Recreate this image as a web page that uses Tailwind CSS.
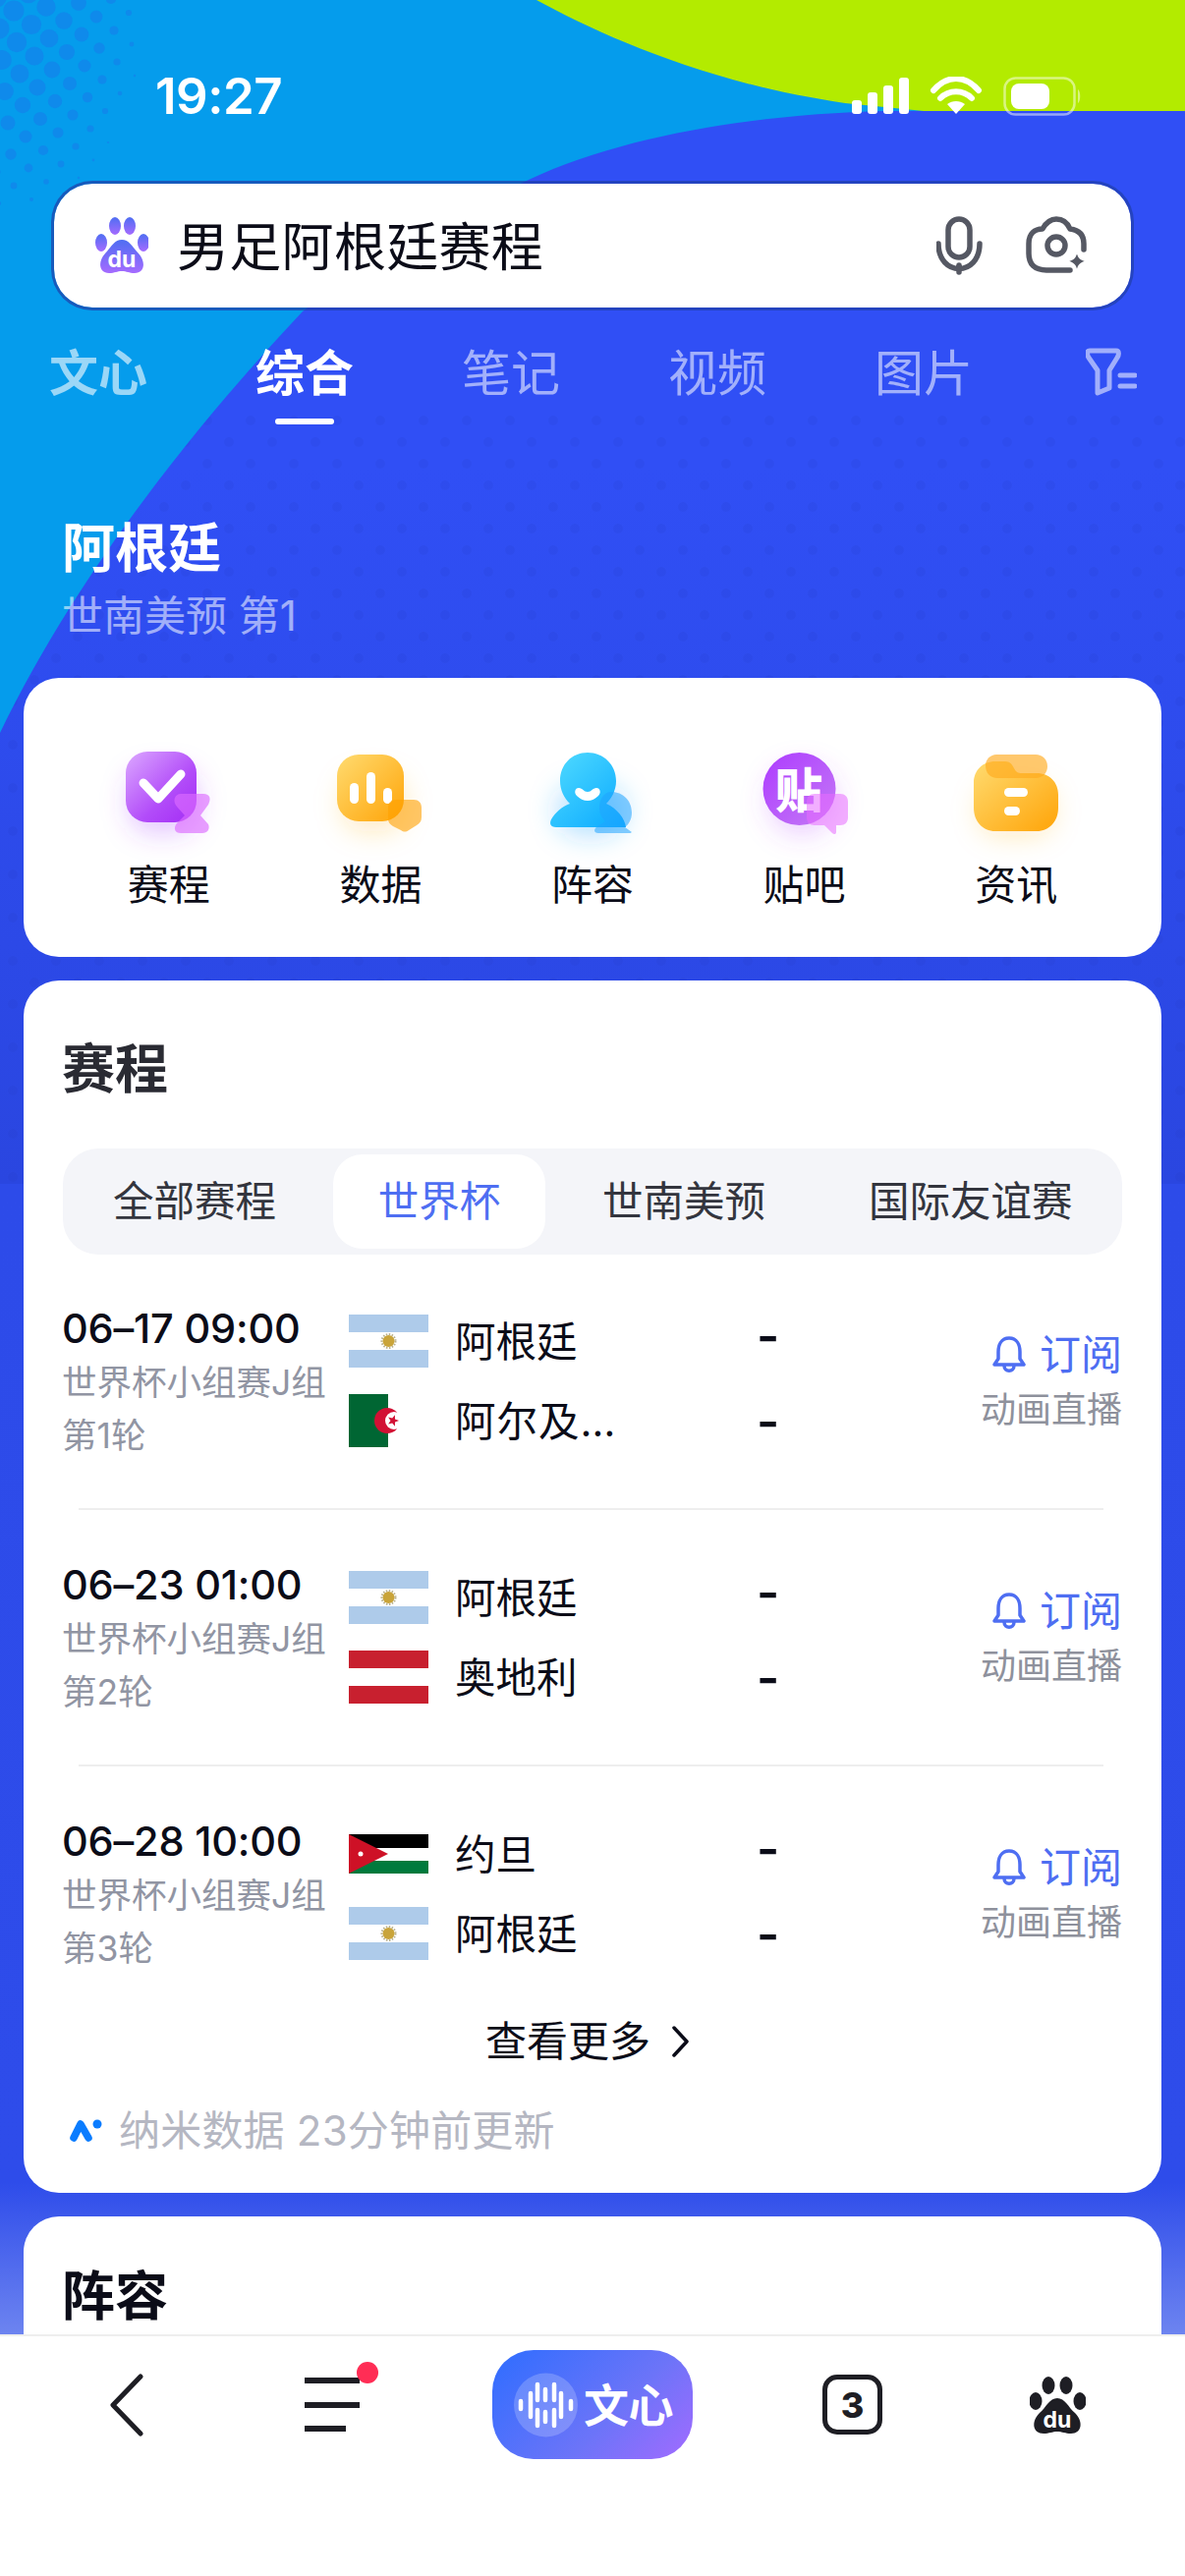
<!DOCTYPE html>
<html lang="zh-CN">
<head>
  <meta charset="UTF-8" />
  <meta name="viewport" content="width=device-width, initial-scale=1.0"/>
  <title>男足阿根廷赛程</title>
  <script src="https://cdn.jsdelivr.net/npm/@tailwindcss/browser@4"></script>
</head>
<body class="bg-white">
<div class="relative w-[1206px] h-[2622px] overflow-hidden flex flex-col font-['Inter','Noto_Sans_CJK_SC',sans-serif] text-[#0b0c18]">

  <!-- page backdrop -->
  <svg class="absolute top-0 left-0" width="1206" height="2376" viewBox="0 0 1206 2376">
    <defs>
      <linearGradient id="page" gradientUnits="userSpaceOnUse" x1="0" y1="0" x2="0" y2="2376">
        <stop offset="0" stop-color="#304ff5"/>
        <stop offset="0.2" stop-color="#304ff5"/>
        <stop offset="0.507" stop-color="#2a46e0"/>
        <stop offset="0.507" stop-color="#2d4be9"/>
        <stop offset="0.935" stop-color="#2e4cea"/>
        <stop offset="1" stop-color="#6d84f0"/>
      </linearGradient>
      <pattern id="halftone" width="44" height="44" patternUnits="userSpaceOnUse">
        <circle cx="13" cy="10" r="5" fill="#1c34b8" fill-opacity="0.1"/>
        <circle cx="35" cy="32" r="5" fill="#1c34b8" fill-opacity="0.1"/>
      </pattern>
    </defs>
    <rect width="1206" height="2376" fill="url(#page)"/>
    <rect y="420" width="1206" height="785" fill="url(#halftone)"/>
    <path d="M0 0H1206V113H900C780 116 640 135 538 183C440 230 370 270 308 317C230 400 90 560 0 746Z" fill="#059cec"/>
    <g id="dots" fill="#0f8aeb"></g>
    <path d="M546 0C610 35 720 85 860 105L940 113H1206V0Z" fill="#b3eb00"/>
  </svg>

  <div class="relative flex-1 overflow-hidden flex flex-col">
    <!-- status bar -->
    <div class="h-[184px] shrink-0 flex items-start pt-[70px] pl-[158px]">
      <span class="text-[51px] leading-[56px] font-semibold text-white tracking-[-0.5px]">19:27</span>
      <svg class="ml-auto mr-[102px] mt-[8px]" width="237" height="40" viewBox="865 78 237 40" fill="#fff">
        <rect x="865" y="102" width="10" height="14" rx="3"/>
        <rect x="881" y="94" width="10" height="22" rx="3"/>
        <rect x="897" y="87" width="10" height="29" rx="3"/>
        <rect x="913" y="79" width="10" height="37" rx="3"/>
        <path d="M948 92C962 76 980 76 994 92M955 100C964 91 978 91 987 100" fill="none" stroke="#fff" stroke-width="6" stroke-linecap="round"/>
        <path d="M962 106C967 102 975 102 980 106L971 116Z"/>
        <rect x="1020.500" y="79.500" width="71" height="37" rx="11" fill="none" stroke="#fff" stroke-opacity="0.5" stroke-width="2.500"/>
        <rect x="1027" y="85" width="39" height="26" rx="8"/>
        <path d="M1095 91C1098 93 1098 103 1095 105Z" fill-opacity="0.5"/>
      </svg>
    </div>

    <!-- search box -->
    <div class="mx-[52px] h-[132px] shrink-0 rounded-[42px] bg-white border-[3px] border-[#1f3fa8]/70 bg-clip-padding flex items-center pl-[42px] pr-[43px]">
      <svg width="54" height="58" viewBox="97 222 54 58">
        <defs>
          <linearGradient id="paw" x1="0" y1="0" x2="0" y2="1">
            <stop offset="0" stop-color="#4e6ef2"/>
            <stop offset="1" stop-color="#a56bff"/>
          </linearGradient>
        </defs>
        <g fill="url(#paw)">
          <ellipse cx="117" cy="231" rx="6" ry="9"/>
          <ellipse cx="132" cy="231" rx="6" ry="9"/>
          <ellipse cx="103" cy="248" rx="6" ry="9"/>
          <ellipse cx="146" cy="248" rx="6" ry="9"/>
          <path d="M124 245C132 245 135 253 141 259C149 268 147 279 137 279C131 279 129 277 124 277C119 277 117 279 111 279C101 279 99 268 107 259C113 253 116 245 124 245Z"/>
        </g>
        <text x="124" y="273" text-anchor="middle" font-size="23" font-weight="700" fill="#fff" font-family="Inter">du</text>
      </svg>
      <span class="ml-[29px] pt-[3px] text-[53px] leading-[70px] tracking-[0.3px]">男足阿根廷赛程</span>
      <svg class="ml-auto" width="155" height="60" viewBox="954 222 155 60" fill="none" stroke="#555863" stroke-width="5.500" stroke-linecap="round" stroke-linejoin="round">
        <rect x="966" y="225" width="22" height="39" rx="11"/>
        <path d="M956 250C956 284 998 284 998 250M977 272V279"/>
        <path d="M1090 277H1066C1054 277 1048 271 1048 260V250C1048 240 1054 235 1062 235C1066 228 1070 225 1076 225C1083 225 1087 228 1090 235C1098 236 1104 240 1104 250V256"/>
        <circle cx="1076" cy="252" r="9"/>
        <path d="M1097 255C1098 264 1100 266 1108 268C1100 270 1098 272 1097 281C1096 272 1094 270 1086 268C1094 266 1096 264 1097 255Z" fill="#555863" stroke="#fff" stroke-width="2"/>
      </svg>
    </div>

    <!-- search tabs -->
    <div class="mt-[28px] pl-[50px] flex gap-[110px] shrink-0 text-[50px] leading-[72px] text-white/55">
      <div class="w-[100px] font-bold text-white/60 whitespace-nowrap">文心</div>
      <div class="w-[100px] flex flex-col items-center font-bold text-white whitespace-nowrap">综合<span class="mt-[10px] w-[60px] h-[6px] rounded-full bg-white"></span></div>
      <div class="w-[100px] whitespace-nowrap">笔记</div>
      <div class="w-[100px] whitespace-nowrap">视频</div>
      <div class="w-[100px] whitespace-nowrap">图片</div>
      <svg class="ml-[5px] mt-[10px]" width="52" height="50" viewBox="1104 355 52 50" fill="none" stroke="#fff" stroke-opacity="0.55" stroke-width="5" stroke-linejoin="round">
        <path d="M1108 358H1135C1138 358 1138 362 1136 365L1128 378V396L1116 401V378L1107 365C1105 362 1105 358 1108 358Z"/>
        <path d="M1139 383H1154M1139 394H1154" stroke-linecap="round"/>
      </svg>
    </div>

    <!-- entity heading -->
    <div class="mt-[92px] pl-[63px] shrink-0">
      <h1 class="text-[54px] leading-[70px] font-bold text-white">阿根廷</h1>
      <p class="mt-[8px] text-[42px] leading-[50px] text-white/55">世南美预 第1</p>
    </div>

    <!-- quick links -->
    <div class="mt-[38px] mx-[24px] h-[284px] shrink-0 rounded-[36px] bg-white px-[40px] pt-[60px] grid grid-cols-5">
      <div class="flex flex-col items-center">
        <svg class="overflow-visible" width="130" height="110" viewBox="107 750 130 110">
          <defs>
            <filter id="glow" x="-60%" y="-60%" width="220%" height="220%"><feGaussianBlur stdDeviation="14"/></filter>
            <linearGradient id="ip" x1="0" y1="0" x2="1" y2="1"><stop offset="0" stop-color="#dca8ff"/><stop offset="0.6" stop-color="#b24cf9"/><stop offset="1" stop-color="#a32cf5"/></linearGradient>
            <linearGradient id="io" x1="0" y1="0" x2="1" y2="1"><stop offset="0" stop-color="#ffdb70"/><stop offset="1" stop-color="#ffa408"/></linearGradient>
            <linearGradient id="ib" x1="0" y1="0" x2="1" y2="1"><stop offset="0" stop-color="#52dcff"/><stop offset="1" stop-color="#08a8ff"/></linearGradient>
            <linearGradient id="iv" x1="0" y1="0" x2="1" y2="1"><stop offset="0" stop-color="#ad3bff"/><stop offset="1" stop-color="#c47af5"/></linearGradient>
          </defs>
          <rect x="132" y="785" width="68" height="62" rx="22" fill="#a43cff" fill-opacity="0.32" filter="url(#glow)"/>
          <rect x="128" y="765" width="72" height="72" rx="22" fill="url(#ip)"/>
          <path d="M146 797L161 813L184 788" fill="none" stroke="#fff" stroke-width="9" stroke-linecap="round" stroke-linejoin="round"/>
          <path d="M184 808H207C214 808 215 813 212 819L204 830L212 839C214 844 211 848 206 848H184C178 848 176 843 180 838L188 830L180 821C175 815 178 808 184 808Z" fill="#dc6cff" fill-opacity="0.65"/>
        </svg>
        <span class="mt-[13px] text-[42px] leading-[56px]">赛程</span>
      </div>
      <div class="flex flex-col items-center">
        <svg class="overflow-visible" width="130" height="110" viewBox="323 750 130 110">
          <rect x="350" y="790" width="62" height="56" rx="22" fill="#ffb020" fill-opacity="0.28" filter="url(#glow)"/>
          <rect x="344" y="768" width="68" height="68" rx="22" fill="url(#io)"/>
          <rect x="357" y="797" width="9" height="21" rx="4.500" fill="#fff"/>
          <rect x="374" y="786" width="9" height="32" rx="4.500" fill="#fff"/>
          <rect x="391" y="802" width="9" height="16" rx="4.500" fill="#fff"/>
          <path d="M404 814H422C427 814 430 817 430 822V832C430 836 428 838 425 840L417 845C414 847 412 847 409 845L401 841C398 839 396 837 396 834V822C396 817 399 814 404 814Z" fill="#ffa000" fill-opacity="0.6"/>
        </svg>
        <span class="mt-[13px] text-[42px] leading-[56px]">数据</span>
      </div>
      <div class="flex flex-col items-center">
        <svg class="overflow-visible" width="130" height="110" viewBox="538 750 130 110">
          <rect x="566" y="800" width="70" height="50" rx="24" fill="#2aa8ff" fill-opacity="0.35" filter="url(#glow)"/>
          <path d="M598 766C614 766 627 778 627 795C627 805 622 813 617 818C628 823 636 833 637 842H566C560 842 559 838 561 834C565 827 572 821 580 818C574 812 570 804 570 795C570 778 582 766 598 766Z" fill="url(#ib)"/>
          <path d="M589 802C593 802 594 806 598 806C602 806 603 802 607 802C611 802 612 807 609 810C606 813 602 815 598 815C594 815 590 813 587 810C584 807 585 802 589 802Z" fill="#fff"/>
          <path d="M622 806C634 806 643 815 643 827C643 834 640 839 636 842L643 847C642 848 641 848 640 848H609C604 848 604 844 608 841L616 836C612 832 610 828 610 822C610 813 615 806 622 806Z" fill="#20a4ff" fill-opacity="0.55"/>
        </svg>
        <span class="mt-[13px] text-[42px] leading-[56px]">阵容</span>
      </div>
      <div class="flex flex-col items-center">
        <svg class="overflow-visible" width="130" height="110" viewBox="753 750 130 110">
          <circle cx="815" cy="815" r="34" fill="#b84cff" fill-opacity="0.28" filter="url(#glow)"/>
          <ellipse cx="812.500" cy="803" rx="37" ry="37" fill="url(#iv)"/>
          <text x="812" y="822" text-anchor="middle" font-size="48" font-weight="900" fill="#fff" font-family="Noto Sans CJK SC">贴</text>
          <path d="M828 808H854C859 808 862 811 862 816V832C862 837 859 840 854 840H850V847C850 849 848 850 846 848L838 840H828C823 840 820 837 820 832V816C820 811 823 808 828 808Z" fill="#e86cff" fill-opacity="0.55"/>
        </svg>
        <span class="mt-[13px] text-[42px] leading-[56px]">贴吧</span>
      </div>
      <div class="flex flex-col items-center">
        <svg class="overflow-visible" width="130" height="110" viewBox="970 750 130 110">
          <rect x="998" y="800" width="74" height="50" rx="20" fill="#ffb020" fill-opacity="0.28" filter="url(#glow)"/>
          <path d="M1014 775H1024C1029 775 1031 778 1033 782C1035 786 1037 787 1041 787H1056C1069 787 1078 796 1078 809V822C1078 836 1069 846 1056 846H1014C1001 846 992 836 992 822V797C992 784 1001 775 1014 775Z" fill="url(#io)"/>
          <path d="M1015 768H1055C1062 768 1067 773 1067 780C1067 787 1062 792 1055 792H1016C1009 792 1004 787 1004 779C1004 773 1009 768 1015 768Z" fill="#ffab1e" fill-opacity="0.65"/>
          <rect x="1023" y="802" width="24" height="9" rx="4.500" fill="#fff"/>
          <rect x="1023" y="821" width="16" height="9" rx="4.500" fill="#fff"/>
        </svg>
        <span class="mt-[13px] text-[42px] leading-[56px]">资讯</span>
      </div>
    </div>

    <!-- schedule card -->
    <div class="mt-[24px] mx-[24px] h-[1234px] shrink-0 rounded-[36px] bg-white px-[40px] pt-[56px]">
      <h2 class="-ml-px text-[54px] leading-[70px] font-bold text-[#2a2b33]">赛程</h2>

      <div class="mt-[45px] h-[108px] rounded-[36px] bg-[#f4f5f9] relative flex items-center text-[41.500px] text-[#33353e] whitespace-nowrap">
        <span class="ml-[51px] w-[168px]">全部赛程</span>
        <span class="ml-[56px] w-[216px] h-[96px] rounded-[30px] bg-white text-[#4e6ef2] flex items-center justify-center">世界杯</span>
        <span class="ml-[58px] w-[168px]">世南美预</span>
        <span class="ml-[103px] w-[210px]">国际友谊赛</span>
      </div>

      <div class="mt-[47px]">
        <!-- match 1 -->
        <div class="flex h-[163px]">
          <div class="w-[291px] shrink-0">
            <div class="-ml-px text-[41.500px] leading-[56px] font-medium tracking-[-0.2px]">06–17 09:00</div>
            <div class="-ml-px mt-px text-[35.500px] leading-[54px] text-[#9195a3] whitespace-nowrap">世界杯小组赛J组</div>
            <div class="-ml-px text-[35.500px] leading-[54px] text-[#9195a3]">第1轮</div>
          </div>
          <div class="pt-[14px] flex flex-col gap-[27px] text-[41.500px] leading-[54px]">
            <div class="flex items-center h-[54px]">
              <svg class="shrink-0" width="81" height="54" viewBox="0 0 81 54"><rect width="81" height="18" fill="#aecbea"/><rect y="36" width="81" height="18" fill="#aecbea"/><circle cx="40.500" cy="27" r="7" fill="none" stroke="#b8b08c" stroke-width="2" stroke-dasharray="1.500 1.500"/><circle cx="40.500" cy="27" r="6" fill="#c9a43a"/></svg>
              <span class="ml-[27px] w-[307px] pt-[2px]">阿根廷</span>
              <span class="w-[19px] text-center text-[50px] font-semibold -translate-y-[5px]">-</span>
            </div>
            <div class="flex items-center h-[54px]">
              <svg class="shrink-0" width="81" height="54" viewBox="0 0 81 54"><rect width="40" height="54" fill="#006633"/><circle cx="39" cy="27" r="13" fill="#d21034"/><circle cx="46" cy="27" r="9" fill="#fff"/><path d="M51 27L47 28.500L46.900 32.700L44.200 29.400L40.100 30.500L42.500 27L40.100 23.500L44.200 24.600L46.900 21.300L47 25.500Z" fill="#d21034"/></svg>
              <span class="ml-[27px] w-[307px] pt-[2px] tracking-[1px]">阿尔及…</span>
              <span class="w-[19px] text-center text-[50px] font-semibold translate-y-[1px]">-</span>
            </div>
          </div>
          <div class="ml-auto pt-[27px] flex flex-col items-end">
            <div class="flex items-center text-[42px] leading-[56px] text-[#4e6ef2]">
              <svg width="34" height="40" viewBox="0 0 34 40" fill="none" stroke="#4e6ef2" stroke-width="3.500" stroke-linejoin="round"><path d="M17 3C25 3 28 10 28 17V24L32 30H2L6 24V17C6 10 9 3 17 3Z"/><path d="M12 31C12 38 22 38 22 31"/></svg>
              <span class="ml-[14px]">订阅</span>
            </div>
            <div class="text-[36px] leading-[56px] text-[#8e919c]">动画直播</div>
          </div>
        </div>

        <div class="my-[48px] ml-[16px] mr-[19px] h-[2px] bg-[#eeeeee]"></div>

        <!-- match 2 -->
        <div class="flex h-[163px]">
          <div class="w-[291px] shrink-0">
            <div class="-ml-px text-[41.500px] leading-[56px] font-medium tracking-[-0.2px]">06–23 01:00</div>
            <div class="-ml-px mt-px text-[35.500px] leading-[54px] text-[#9195a3] whitespace-nowrap">世界杯小组赛J组</div>
            <div class="-ml-px text-[35.500px] leading-[54px] text-[#9195a3]">第2轮</div>
          </div>
          <div class="pt-[14px] flex flex-col gap-[27px] text-[41.500px] leading-[54px]">
            <div class="flex items-center h-[54px]">
              <svg class="shrink-0" width="81" height="54" viewBox="0 0 81 54"><rect width="81" height="18" fill="#aecbea"/><rect y="36" width="81" height="18" fill="#aecbea"/><circle cx="40.500" cy="27" r="7" fill="none" stroke="#b8b08c" stroke-width="2" stroke-dasharray="1.500 1.500"/><circle cx="40.500" cy="27" r="6" fill="#c9a43a"/></svg>
              <span class="ml-[27px] w-[307px] pt-[2px]">阿根廷</span>
              <span class="w-[19px] text-center text-[50px] font-semibold -translate-y-[5px]">-</span>
            </div>
            <div class="flex items-center h-[54px]">
              <svg class="shrink-0" width="81" height="54" viewBox="0 0 81 54"><rect width="81" height="54" fill="#c8202f"/><rect y="18" width="81" height="18" fill="#fff"/></svg>
              <span class="ml-[27px] w-[307px] pt-[2px]">奥地利</span>
              <span class="w-[19px] text-center text-[50px] font-semibold translate-y-[1px]">-</span>
            </div>
          </div>
          <div class="ml-auto pt-[27px] flex flex-col items-end">
            <div class="flex items-center text-[42px] leading-[56px] text-[#4e6ef2]">
              <svg width="34" height="40" viewBox="0 0 34 40" fill="none" stroke="#4e6ef2" stroke-width="3.500" stroke-linejoin="round"><path d="M17 3C25 3 28 10 28 17V24L32 30H2L6 24V17C6 10 9 3 17 3Z"/><path d="M12 31C12 38 22 38 22 31"/></svg>
              <span class="ml-[14px]">订阅</span>
            </div>
            <div class="text-[36px] leading-[56px] text-[#8e919c]">动画直播</div>
          </div>
        </div>

        <div class="my-[48px] ml-[16px] mr-[19px] h-[2px] bg-[#eeeeee]"></div>

        <!-- match 3 -->
        <div class="flex h-[163px]">
          <div class="w-[291px] shrink-0">
            <div class="-ml-px text-[41.500px] leading-[56px] font-medium tracking-[-0.2px]">06–28 10:00</div>
            <div class="-ml-px mt-px text-[35.500px] leading-[54px] text-[#9195a3] whitespace-nowrap">世界杯小组赛J组</div>
            <div class="-ml-px text-[35.500px] leading-[54px] text-[#9195a3]">第3轮</div>
          </div>
          <div class="pt-[14px] flex flex-col gap-[27px] text-[41.500px] leading-[54px]">
            <div class="flex items-center h-[54px]">
              <svg class="shrink-0" width="81" height="40" viewBox="0 0 81 40"><rect width="81" height="14" fill="#000"/><rect y="14" width="81" height="13" fill="#fff"/><rect y="27" width="81" height="13" fill="#007a3d"/><path d="M0 0L40 20L0 40Z" fill="#ce1126"/><circle cx="12" cy="20" r="2.500" fill="#fff"/></svg>
              <span class="ml-[27px] w-[307px] pt-[2px]">约旦</span>
              <span class="w-[19px] text-center text-[50px] font-semibold -translate-y-[5px]">-</span>
            </div>
            <div class="flex items-center h-[54px]">
              <svg class="shrink-0" width="81" height="54" viewBox="0 0 81 54"><rect width="81" height="18" fill="#aecbea"/><rect y="36" width="81" height="18" fill="#aecbea"/><circle cx="40.500" cy="27" r="7" fill="none" stroke="#b8b08c" stroke-width="2" stroke-dasharray="1.500 1.500"/><circle cx="40.500" cy="27" r="6" fill="#c9a43a"/></svg>
              <span class="ml-[27px] w-[307px] pt-[2px]">阿根廷</span>
              <span class="w-[19px] text-center text-[50px] font-semibold translate-y-[1px]">-</span>
            </div>
          </div>
          <div class="ml-auto pt-[27px] flex flex-col items-end">
            <div class="flex items-center text-[42px] leading-[56px] text-[#4e6ef2]">
              <svg width="34" height="40" viewBox="0 0 34 40" fill="none" stroke="#4e6ef2" stroke-width="3.500" stroke-linejoin="round"><path d="M17 3C25 3 28 10 28 17V24L32 30H2L6 24V17C6 10 9 3 17 3Z"/><path d="M12 31C12 38 22 38 22 31"/></svg>
              <span class="ml-[14px]">订阅</span>
            </div>
            <div class="text-[36px] leading-[56px] text-[#8e919c]">动画直播</div>
          </div>
        </div>
      </div>

      <div class="mt-[41px] flex items-center pl-[430px] text-[42px] leading-[56px]">
        <span>查看更多</span>
        <svg class="ml-[21px]" width="20" height="32" viewBox="0 0 20 32" fill="none" stroke="#0b0c18" stroke-width="3.500" stroke-linecap="round" stroke-linejoin="round"><path d="M3 2L16 16L3 30"/></svg>
      </div>

      <div class="mt-[35px] flex items-center text-[42px] leading-[56px] text-[#b5b7c2]">
        <svg class="ml-[5px]" width="36" height="26" viewBox="69 2155 36 26" fill="none" stroke="#0a7cff" stroke-width="7.500" stroke-linecap="round" stroke-linejoin="round"><path d="M75 2175L82 2161L90 2175"/><circle cx="99" cy="2161" r="4.500" fill="#0a7cff" stroke="none"/></svg>
        <span class="ml-[16px] tracking-[0.2px]">纳米数据 23分钟前更新</span>
      </div>
    </div>

    <!-- lineup card, cut off by the toolbar -->
    <div class="mt-[24px] mx-[24px] h-[300px] shrink-0 rounded-t-[36px] bg-white px-[40px] pt-[47px]">
      <h2 class="-ml-px text-[54px] leading-[70px] font-bold">阵容</h2>
    </div>
  </div>

  <!-- bottom toolbar -->
  <div class="relative h-[246px] shrink-0 bg-white border-t-2 border-[#eeeeee] flex items-start pl-[112px]">
    <svg class="mt-[38px]" width="34" height="64" viewBox="0 0 34 64" fill="none" stroke="#1e1e24" stroke-width="5" stroke-linecap="round" stroke-linejoin="round"><path d="M31 3L3 32L31 61"/></svg>
    <svg class="ml-[164px] mt-[26px]" width="75" height="74" viewBox="310 2404 75 74">
      <rect x="310" y="2420" width="56" height="6" fill="#1e1e24"/>
      <rect x="310" y="2445" width="56" height="6" fill="#1e1e24"/>
      <rect x="310" y="2469" width="42" height="6" fill="#1e1e24"/>
      <circle cx="374" cy="2415" r="11" fill="#ff2d55"/>
    </svg>
    <div class="ml-[116px] mt-[14px] w-[204px] h-[111px] rounded-[42px] bg-[linear-gradient(135deg,#2e6dff,#6c74f8_60%,#a26bff)] flex items-center pl-[22px]">
      <svg width="65" height="66" viewBox="0 0 65 66">
        <circle cx="32.500" cy="33" r="32.500" fill="#fff" fill-opacity="0.2"/>
        <path d="M7 29V37M17 21V45M24 12V28M24 38V54M32 17V28M32 40V50M41 12V28M41 38V54M48 21V45M58 29V37" fill="none" stroke="#fff" stroke-width="4.500" stroke-linecap="round"/>
      </svg>
      <span class="ml-[6px] text-[46px] leading-[56px] font-bold text-white tracking-[-0.5px]">文心</span>
    </div>
    <div class="ml-[132px] mt-[39px] w-[61px] h-[61px] rounded-[15px] border-[5px] border-[#1e1e24] flex items-center justify-center text-[36px] leading-none font-extrabold text-[#1e1e24]">3</div>
    <svg class="ml-[150px] mt-[41px]" width="57" height="58" viewBox="1048 2419 57 58">
      <g fill="#1e1e24">
        <ellipse cx="1067" cy="2428" rx="6.500" ry="9"/>
        <ellipse cx="1085" cy="2428" rx="6.500" ry="9"/>
        <ellipse cx="1054" cy="2444" rx="6.500" ry="9"/>
        <ellipse cx="1099" cy="2444" rx="6.500" ry="9"/>
        <path d="M1076 2441C1084 2441 1087 2450 1094 2456C1103 2465 1101 2477 1090 2477C1084 2477 1081 2475 1076 2475C1071 2475 1068 2477 1062 2477C1051 2477 1049 2465 1058 2456C1065 2450 1068 2441 1076 2441Z"/>
      </g>
      <text x="1076" y="2471" text-anchor="middle" font-size="23" font-weight="700" fill="#fff" font-family="Inter">du</text>
    </svg>
  </div>
</div>

<script>
  // halftone patch in the top left corner
  const dots = document.getElementById("dots");
  let markup = "";
  for (let i = -8; i < 14; i++) {
    for (let j = -4; j < 16; j++) {
      const x = 32 + i * 33 - j * 15;
      const y = 25 - i * 4 + j * 18;
      if (x < -12 || y < -12) continue;
      const t = (x / 145) ** 2 + (y / 215) ** 2;
      if (t > 1.05) continue;
      const r = Math.min(11, 10.7 - 9.3 * t);
      markup += `<circle cx="${x}" cy="${y}" r="${r.toFixed(1)}"/>`;
    }
  }
  dots.innerHTML = markup;
</script>
</body>
</html>
